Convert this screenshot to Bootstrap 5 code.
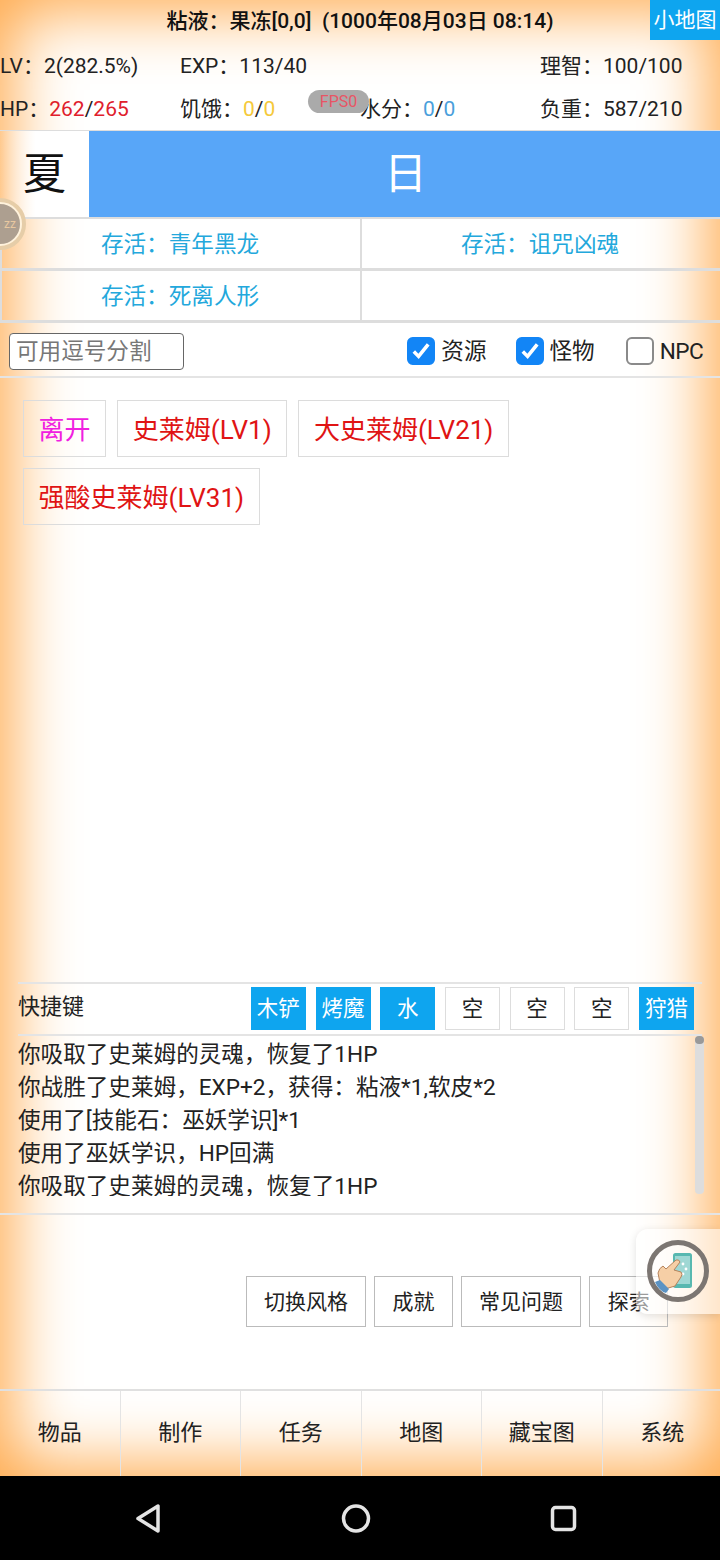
<!DOCTYPE html>
<html lang="zh">
<head>
    <meta charset="UTF-8">
    <meta name="viewport" content="width=device-width, initial-scale=1.0">
    <title>粘液</title>
    <link rel="stylesheet" href="https://cdn.jsdelivr.net/npm/bootstrap@5.3.0/dist/css/bootstrap.min.css">
    <style>
        body { margin: 0; background: #000; font-family: Roboto, "Noto Sans CJK SC", sans-serif; color: #222; }
        .app-shell { position: relative; height: 1476px; overflow: hidden; background: #fff; box-shadow: inset 0 0 66px 11px #ffa848; }
        .top-title { height: 44px; font-size: 21px; font-weight: 500; color: #111; }
        .map-btn { position: absolute; top: 0; right: 0; width: 70px; height: 40px; background: #0ea5ef; color: #fff; font-size: 21px; line-height: 40px; text-align: center; white-space: nowrap; }
        .stat-row { height: 43px; font-size: 21px; line-height: 45px; white-space: nowrap; }
        .c-red { color: #e0202c; }
        .c-yellow { color: #f5c93a; }
        .c-blue { color: #4a9fdc; }
        .fps-pill { position: absolute; left: 308px; top: 90px; width: 61px; height: 23px; border-radius: 12px; background: #aaa; color: #e85565; font-size: 16px; line-height: 23px; text-align: center; }
        .season-row { height: 89px; border-top: 1px solid #ddd; border-bottom: 2px solid #ddd; }
        .season-cell { width: 89px; font-size: 43px; color: #111; background: linear-gradient(90deg, transparent, #fff 40%); }
        .day-cell { background: #58a6f8; color: #fff; font-size: 43px; padding-left: 2px; }
        .alive-cell { height: 52px; padding: 2px 2px 0 0; font-size: 22.6px; color: #23a8dc; border-bottom: 3px solid #ddd; border-left: 2px solid #ddd; }
        .filter-row { height: 55px; border-bottom: 2px solid #e4e4e4; padding: 4px 17px 0 9px; font-size: 22.6px; color: #222; }
        .filter-input { width: 175px; height: 37px; padding: 0 6px; font-size: 22.6px; border: 1px solid #666; border-radius: 4px; background: #fff; }
        .filter-input::placeholder { color: #777; }
        .filter-check { width: 28px; height: 28px; margin: 0 6px 0 0; border-radius: 5px; border: 2px solid #8a8a8a; }
        .filter-check:checked { border-color: #1285f6; background-color: #1285f6; background-image: url("data:image/svg+xml,%3csvg xmlns='http://www.w3.org/2000/svg' viewBox='0 0 20 20'%3e%3cpath fill='none' stroke='%23fff' stroke-width='3' d='M4 10.500l4 4 8-10'/%3e%3c/svg%3e"); }
        .check-monster { margin-left: 29px; }
        .check-npc { margin-left: 31px; letter-spacing: -.6px; }
        .target-list { flex: 1 1 auto; padding: 22px 23px 0; align-content: flex-start; gap: 11px; }
        .target-btn { height: 57px; padding: 0 14.600px; font-size: 26px; line-height: 58px; color: #e01414; border: 1px solid #dcdcdc; white-space: nowrap; }
        .target-btn.is-leave { color: #f020e0; }
        .hotkey-row { height: 54px; margin-left: 18px; margin-right: 18px; padding: 0 8px 2px 0; border-top: 2px solid #e4e4e4; border-bottom: 2px solid #e4e4e4; font-size: 22px; color: #222; }
        .hotkey-set { gap: 9.7px; }
        .hotkey-btn { width: 55px; height: 43px; font-size: 21.5px; line-height: 41px; text-align: center; border: 1px solid #ddd; background: #fff; white-space: nowrap; overflow: hidden; }
        .hotkey-btn.is-on { background: #0ea5ef; border-color: #0ea5ef; color: #fff; }
        .log-box { position: relative; height: 179px; border-bottom: 2px solid #e4e4e4; }
        .log-text { height: 160px; overflow: hidden; padding: 2px 0 0 18px; font-size: 22.6px; line-height: 33px; white-space: nowrap; }
        .log-track { position: absolute; left: 695px; top: 0; width: 9px; height: 158px; border-radius: 4px; background: #ddd; }
        .log-thumb { width: 9px; height: 8px; border-radius: 4px; background: #999; }
        .action-row { height: 174px; padding: 61px 52px 0 0; gap: 8px; }
        .action-btn { height: 51px; padding: 0 17.300px; font-size: 21px; line-height: 51px; border: 1px solid #bbb; color: #222; white-space: nowrap; }
        .tab-row { width: 722px; height: 87px; border-top: 2px solid #e0e0e0; }
        .tab-cell { flex: 1 1 0; padding-bottom: 2px; font-size: 22px; color: #222; border-right: 1px solid #e4e4e4; }
        .tab-cell:last-child { border-right: 0; }
        .sleep-ball { position: absolute; left: -26px; top: 198px; width: 52px; height: 52px; border-radius: 50%; border: 5px solid #e6cda8; background: #ad9f90; outline: 2px solid #fff2dc; outline-offset: -6px; color: #e8c8a0; font-size: 12px; line-height: 42px; text-align: right; padding-right: 5px; }
        .hand-panel { position: absolute; left: 636px; top: 1229px; width: 84px; height: 85px; border-radius: 12px 0 0 12px; background: rgba(255,255,255,.55); box-shadow: 0 2px 8px rgba(0,0,0,.12); }
        .hand-ball { position: absolute; left: 9px; top: 10px; width: 64px; height: 64px; }
        .nav-bar { height: 84px; background: #000; }
    </style>
</head>
<body>
    <div class="app-shell d-flex flex-column">
        <div class="top-title d-flex align-items-center justify-content-center">粘液：果冻[0,0]&nbsp;&nbsp;(1000年08月03日 08:14)</div>

        <div class="row g-0 stat-row">
            <div class="col-3">LV：2(282.5%)</div>
            <div class="col-3">EXP：113/40</div>
            <div class="col-3"></div>
            <div class="col-3">理智：100/100</div>
        </div>
        <div class="row g-0 stat-row">
            <div class="col-3">HP：<span class="c-red">262</span>/<span class="c-red">265</span></div>
            <div class="col-3">饥饿：<span class="c-yellow">0</span>/<span class="c-yellow">0</span></div>
            <div class="col-3">水分：<span class="c-blue">0</span>/<span class="c-blue">0</span></div>
            <div class="col-3">负重：587/210</div>
        </div>

        <div class="season-row d-flex">
            <div class="season-cell d-flex align-items-center justify-content-center">夏</div>
            <div class="day-cell flex-grow-1 d-flex align-items-center justify-content-center">日</div>
        </div>

        <div class="row g-0">
            <div class="col-6 alive-cell d-flex align-items-center justify-content-center">存活：青年黑龙</div>
            <div class="col-6 alive-cell d-flex align-items-center justify-content-center">存活：诅咒凶魂</div>
            <div class="col-6 alive-cell d-flex align-items-center justify-content-center">存活：死离人形</div>
            <div class="col-6 alive-cell"></div>
        </div>

        <div class="filter-row d-flex align-items-center">
            <input class="filter-input" type="text" placeholder="可用逗号分割">
            <label class="d-flex align-items-center ms-auto"><input class="form-check-input filter-check" type="checkbox" checked>资源</label>
            <label class="d-flex align-items-center check-monster"><input class="form-check-input filter-check" type="checkbox" checked>怪物</label>
            <label class="d-flex align-items-center check-npc"><input class="form-check-input filter-check" type="checkbox">NPC</label>
        </div>

        <div class="target-list d-flex flex-wrap">
            <div class="target-btn is-leave">离开</div>
            <div class="target-btn">史莱姆(LV1)</div>
            <div class="target-btn">大史莱姆(LV21)</div>
            <div class="target-btn">强酸史莱姆(LV31)</div>
        </div>

        <div class="hotkey-row d-flex align-items-center">
            <div class="me-auto pb-1">快捷键</div>
            <div class="d-flex hotkey-set">
                <div class="hotkey-btn is-on">木铲</div>
                <div class="hotkey-btn is-on">烤魔</div>
                <div class="hotkey-btn is-on">水</div>
                <div class="hotkey-btn">空</div>
                <div class="hotkey-btn">空</div>
                <div class="hotkey-btn">空</div>
                <div class="hotkey-btn is-on">狩猎</div>
            </div>
        </div>

        <div class="log-box">
            <div class="log-text">
                <div>你吸取了史莱姆的灵魂，恢复了1HP</div>
                <div>你战胜了史莱姆，EXP+2，获得：粘液*1,软皮*2</div>
                <div>使用了[技能石：巫妖学识]*1</div>
                <div>使用了巫妖学识，HP回满</div>
                <div>你吸取了史莱姆的灵魂，恢复了1HP</div>
            </div>
            <div class="log-track"><div class="log-thumb"></div></div>
        </div>

        <div class="action-row d-flex justify-content-end">
            <div class="action-btn">切换风格</div>
            <div class="action-btn">成就</div>
            <div class="action-btn">常见问题</div>
            <div class="action-btn">探索</div>
        </div>

        <div class="tab-row d-flex">
            <div class="tab-cell d-flex align-items-center justify-content-center">物品</div>
            <div class="tab-cell d-flex align-items-center justify-content-center">制作</div>
            <div class="tab-cell d-flex align-items-center justify-content-center">任务</div>
            <div class="tab-cell d-flex align-items-center justify-content-center">地图</div>
            <div class="tab-cell d-flex align-items-center justify-content-center">藏宝图</div>
            <div class="tab-cell d-flex align-items-center justify-content-center">系统</div>
        </div>

        <!-- things floating over the page -->
        <div class="map-btn">小地图</div>
        <div class="fps-pill">FPS0</div>
        <div class="sleep-ball">zz</div>
        <div class="hand-panel">
            <svg class="hand-ball" viewBox="0 0 64 64">
                <circle cx="33" cy="32" r="28.500" fill="#fff" fill-opacity=".3" stroke="#7c7672" stroke-width="5"/>
                <rect x="28" y="14" width="19" height="35" rx="2.500" fill="#58b8b0"/>
                <rect x="30" y="17" width="15" height="28" fill="#9fd8d4"/>
                <circle cx="38" cy="25" r="1.400" fill="#fff"/><circle cx="41" cy="30" r="1.400" fill="#fff"/><circle cx="38" cy="35" r="1.400" fill="#fff"/>
                <path d="M15 44L13 34Q14 29 18 27L21 30L31 21Q34 20 35 23L29 31L36 33Q38 35 36 38L30 47L20 50Z" fill="#f6cfa6" stroke="#b5835c" stroke-width="1"/>
                <path d="M10 43L15 41L24 50L21 54Q14 52 10 43Z" fill="#5b93c4"/>
            </svg>
        </div>
    </div>

    <div class="nav-bar d-flex">
        <svg width="720" height="84" viewBox="0 0 720 84">
            <path d="M158 30v25l-20-12.500z" fill="none" stroke="#e4e4e4" stroke-width="3.500" stroke-linejoin="round"/>
            <circle cx="356" cy="42.500" r="12.500" fill="none" stroke="#e4e4e4" stroke-width="3.500"/>
            <rect x="552.500" y="31.500" width="22" height="22" rx="3" fill="none" stroke="#e4e4e4" stroke-width="3.500"/>
        </svg>
    </div>

    <script src="https://cdn.jsdelivr.net/npm/bootstrap@5.3.0/dist/js/bootstrap.bundle.min.js"></script>
</body>
</html>
